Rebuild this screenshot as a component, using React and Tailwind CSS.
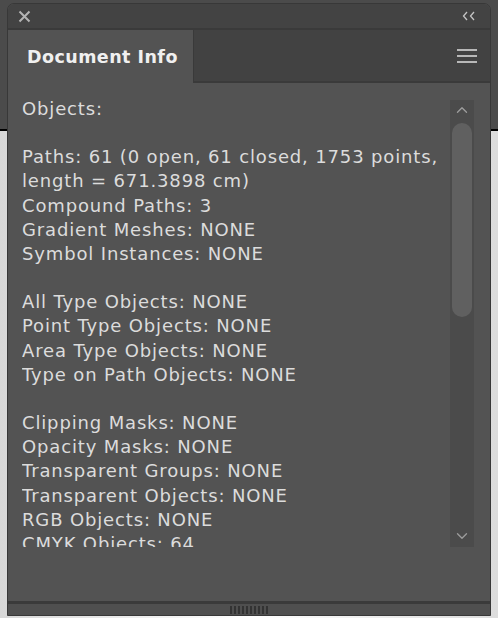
import { ChevronUp, ChevronDown } from 'lucide-react'

const groups = [
  ['Objects:'],
  [
    'Paths: 61 (0 open, 61 closed, 1753 points,',
    'length = 671.3898 cm)',
    'Compound Paths: 3',
    'Gradient Meshes: NONE',
    'Symbol Instances: NONE',
  ],
  [
    'All Type Objects: NONE',
    'Point Type Objects: NONE',
    'Area Type Objects: NONE',
    'Type on Path Objects: NONE',
  ],
  [
    'Clipping Masks: NONE',
    'Opacity Masks: NONE',
    'Transparent Groups: NONE',
    'Transparent Objects: NONE',
    'RGB Objects: NONE',
    'CMYK Objects: 64',
  ],
]

function App() {
  return (
    <div className="relative w-[498px] h-[618px] overflow-hidden bg-white" style={{ fontFamily: '"DejaVu Sans", "Liberation Sans", sans-serif' }}>
      {/* canvas behind the panel */}
      <div className="h-[129px] bg-[#4b4b4b]" />
      <div className="h-[2px] bg-black" />
      <div className="h-full bg-gradient-to-r from-[#d8d8d8] via-white to-[#dcdcdc]" />

      {/* floating panel */}
      <div className="absolute left-[7px] top-[3px] w-[484px] h-[613px] flex flex-col rounded-t-[7px] border border-[#383838] bg-[#535353] overflow-hidden">
        {/* title bar */}
        <div className="h-[26px] shrink-0 flex items-center justify-between px-[10px] bg-[#434343] border-b-[2px] border-[#3a3a3a]">
          <svg width="13" height="13" viewBox="0 0 13 13" className="text-[#b4b4b4]">
            <path d="M1.5 1.5 L11.5 11.5 M11.5 1.5 L1.5 11.5" stroke="currentColor" strokeWidth="2" />
          </svg>
          <svg width="14" height="10" viewBox="0 0 14 10" className="text-[#c4c4c4] mr-[4px]">
            <path d="M5 1 L1.5 5 L5 9 M12 1 L8.5 5 L12 9" fill="none" stroke="currentColor" strokeWidth="1.3" />
          </svg>
        </div>

        {/* tab row */}
        <div className="h-[53px] shrink-0 flex bg-[#424242] border-b-[2px] border-[#3a3a3a]">
          <div className="w-[186px] bg-[#535353] border-r border-[#3a3a3a] mb-[-2px] flex items-center pl-[19px] pt-[2px]">
            <span className="text-[17.5px] font-bold text-[#f0f0f0] tracking-[0.45px]">Document Info</span>
          </div>
          <div className="flex-1 flex items-center justify-end pr-[13px]">
            <div className="flex flex-col gap-[4px] w-[20px]">
              <div className="h-[2px] bg-[#b8b8b8]" />
              <div className="h-[2px] bg-[#b8b8b8]" />
              <div className="h-[2px] bg-[#b8b8b8]" />
            </div>
          </div>
        </div>

        {/* content */}
        <div className="flex-1 flex pl-[14px] pr-[16px] pt-[14px] pb-[54px] min-h-0">
          <div className="flex-1 overflow-hidden text-[18px] leading-[24.2px] tracking-[0.85px] text-[#dcdcdc]">
            {groups.map((g, i) => (
              <div key={i} className="mb-[24px]">
                {g.map((line) => (
                  <div key={line} className="whitespace-nowrap">{line}</div>
                ))}
              </div>
            ))}
          </div>
          <div className="w-[24px] mt-[3px] flex flex-col items-center bg-[#4b4b4b]">
            <ChevronUp size={18} strokeWidth={1.8} className="text-[#9c9c9c] mt-[1px] shrink-0" />
            <div className="w-[20px] h-[194px] mt-[4px] rounded-full bg-[#606060]" />
            <div className="flex-1" />
            <ChevronDown size={18} strokeWidth={1.8} className="text-[#9c9c9c] mb-[2px] shrink-0" />
          </div>
        </div>

        {/* bottom grip */}
        <div className="h-[3px] shrink-0 bg-[#3a3a3a]" />
        <div className="h-[11px] shrink-0 bg-[#4f4f4f] flex justify-center items-center">
          <div className="flex gap-[2px]">
            {Array.from({ length: 10 }).map((_, i) => (
              <div key={i} className="w-[2px] h-[8px] bg-[#333333]" />
            ))}
          </div>
        </div>
      </div>
    </div>
  )
}

export default App
